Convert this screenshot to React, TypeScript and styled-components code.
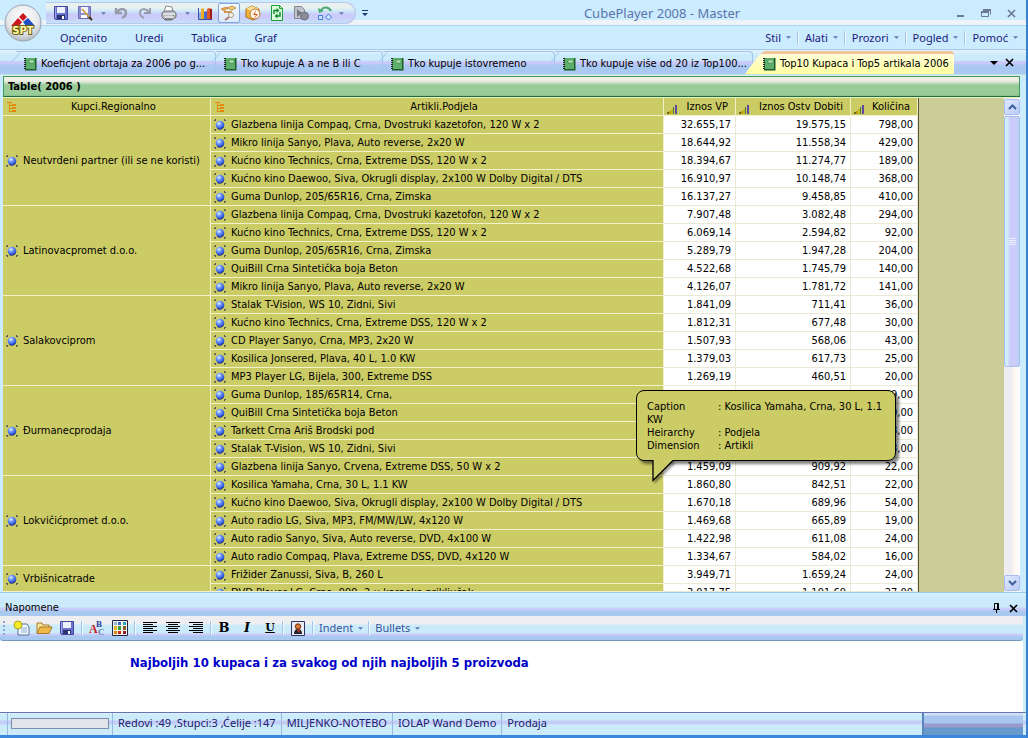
import React from 'react';
import styled, { createGlobalStyle, css } from 'styled-components';

const GlobalStyle = createGlobalStyle`
  * { box-sizing: border-box; }
  body {
    margin: 0;
    font-family: 'DejaVu Sans Condensed', 'Noto Sans', sans-serif;
    font-size: 11px;
    line-height: 14px;
    color: #000;
    background: #cbebff;
  }
  button { font: inherit; color: inherit; background: none; border: 0; padding: 0; margin: 0; white-space: nowrap; }
  svg { display: block; flex: none; }
`;

const UI_FONT = "'Noto Sans', 'Open Sans', sans-serif";

/* ---------- window frame ---------- */

const Window = styled.div`
  min-height: 100vh;
  display: flex;
  flex-direction: column;
  background: #cbebff;
  border-right: 2px solid #3a7fd0;
  border-bottom: 4px solid #3a86dc;
`;

const TitleRow = styled.header`
  height: 26px;
  display: flex;
  align-items: center;
  padding: 0 4px 0 46px;
  position: relative;
  background: linear-gradient(#cbebff 0 20px, #eef3f7 20px 25px, #a9d4f5 25px);
`;

const AppButton = styled.button`
  position: absolute;
  left: 3px;
  top: 2px;
  width: 40px;
  height: 40px;
  z-index: 2;
`;

const QuickBar = styled.div`
  height: 22px;
  width: 310px;
  display: flex;
  align-items: center;
  gap: 2px;
  padding-left: 4px;
  border: 1px solid #b9c6ee;
  border-left: 0;
  border-radius: 0 11px 11px 0;
  background: linear-gradient(#e9f0f0 0 5px, #cde9f8 8px, #ccccfb 11px 15px, #c3e4f6 20px);
`;

const IconButton = styled.button<{ $on?: boolean; $w?: number }>`
  width: ${(p) => p.$w ?? 22}px;
  height: 20px;
  flex: none;
  display: flex;
  align-items: center;
  justify-content: center;
  ${(p) =>
    p.$on &&
    css`
      border: 1px solid #7fa6dc;
      border-radius: 2px;
      background: linear-gradient(#f4f8ff, #dce8fa);
    `}
`;

const Title = styled.h1`
  flex: 1;
  margin: 0;
  text-align: center;
  font: 400 13px/16px ${UI_FONT};
  color: #5c74ac;
`;

const WindowButtons = styled.div`
  display: flex;
  gap: 3px;
`;

const MenuRow = styled.nav`
  height: 23px;
  display: flex;
  align-items: center;
  justify-content: space-between;
  padding: 0 8px 0 60px;
  font: 400 11px/16px ${UI_FONT};
  color: #20207c;
`;

const MenuGroup = styled.div<{ $gap: number }>`
  display: flex;
  align-items: center;
  gap: ${(p) => p.$gap}px;
`;

const DropButton = styled.button`
  display: flex;
  align-items: center;
  gap: 5px;
`;

const Divider = styled.span`
  width: 2px;
  height: 14px;
  background: linear-gradient(90deg, #a5c4ea 50%, #f2f9ff 50%);
`;

/* ---------- document tabs ---------- */

const TabStrip = styled.div`
  height: 27px;
  display: flex;
  align-items: flex-end;
  padding: 0 12px 2px 16px;
  border-top: 1px solid #a7c9ea;
  background: linear-gradient(#dff0fc 0 2px, #cbebfd 5px 10px, #c8c8fa 12px 14px, #a9c9f3 15px 24px, #d8f0e8 25px);
`;

const Tab = styled.button<{ $w: number; $active?: boolean }>`
  position: relative;
  flex: none;
  width: ${(p) => p.$w}px;
  height: 23px;
  display: flex;
  align-items: center;
  gap: 4px;
  padding: 1px 0 0 7px;
  border-top: 1px solid #a3c7ea;
  border-right: 1px solid #a3c7ea;
  border-radius: 0 4px 0 0;
  &::before {
    content: '';
    position: absolute;
    left: 0;
    top: -1px;
    width: 9px;
    height: 11px;
    border-left: 1px solid #a3c7ea;
    transform: skewX(-40deg);
  }
  ${(p) =>
    p.$active &&
    css`
      margin-left: -8px;
      padding: 0 0 0 17px;
      border: 0;
      border-top: 3px solid #f3c59c;
      background: linear-gradient(#fffdd9, #ffffa0);
      clip-path: polygon(0 100%, 14px 4px, 20px 0, 100% 0, 100% 100%);
      &::before {
        display: none;
      }
    `}
`;

const TabTools = styled.div`
  margin-left: auto;
  display: flex;
  align-items: center;
  gap: 7px;
  height: 23px;
`;

/* ---------- table view ---------- */

const View = styled.main`
  flex: 1;
  display: flex;
  flex-direction: column;
  padding: 0 6px 0 3px;
`;

const Caption = styled.h2`
  margin: 0;
  height: 21px;
  padding-left: 4px;
  border: 1px solid #3f9a5c;
  border-bottom-color: #1d6f3c;
  background: linear-gradient(#f0efe6 0 3px, #dce6d6 5px, #99cc99 8px 17px, #86c08a);
  font-weight: 700;
  font-size: 11px;
  line-height: 20px;
`;

const GridPane = styled.div`
  flex: 1;
  position: relative;
  display: flex;
  align-items: stretch;
  border-top: 1px solid #e6efc0;
  background: #cccc99;
`;

const Grid = styled.table`
  flex: none;
  width: 916px;
  height: 100%;
  table-layout: fixed;
  border-spacing: 0;
  border-right: 1px solid #555533;
`;

const Th = styled.th`
  height: 18px;
  padding: 0;
  font-weight: 400;
  background: #cccc66;
  border-right: 1px solid #f1f1cc;
  border-bottom: 1px solid #f1f1cc;
`;

const HeadInner = styled.div<{ $measure?: boolean }>`
  height: 17px;
  display: flex;
  align-items: ${(p) => (p.$measure ? 'flex-end' : 'center')};
  padding: ${(p) => (p.$measure ? '0 7px 1px 3px' : '0 0 0 4px')};
  > span {
    flex: 1;
    text-align: ${(p) => (p.$measure ? 'right' : 'center')};
  }
`;

const Member = styled.td`
  padding: 0;
  background: #cccc66;
  border-right: 1px solid #f1f1cc;
  border-bottom: 1px solid #f1f1cc;
`;

const Line = styled.div<{ $clip?: boolean }>`
  height: ${(p) => (p.$clip ? 7 : 17)}px;
  overflow: hidden;
`;

const MemberInner = styled.div`
  height: 17px;
  display: flex;
  align-items: center;
  gap: 5px;
  padding-left: 3px;
  white-space: nowrap;
`;

const Value = styled.td`
  padding: 0 4px 0 0;
  text-align: right;
  line-height: 17px;
  background: #fff;
  border-right: 1px solid #e9e9d4;
  border-bottom: 1px solid #e9e9d4;
`;

const ScrollBar = styled.div`
  margin-left: auto;
  width: 16px;
  display: flex;
  flex-direction: column;
  gap: 1px;
  padding: 1px 0;
  background: linear-gradient(90deg, #eeeef2 50%, #fff6ee 60%, #fff);
`;

const ScrollButton = styled.button`
  height: 16px;
  display: flex;
  align-items: center;
  justify-content: center;
  border: 1px solid #a9bdf0;
  border-radius: 2px;
  background: linear-gradient(135deg, #e0eafe, #b9cbf6);
`;

const Thumb = styled.div`
  height: 251px;
  display: flex;
  align-items: center;
  justify-content: center;
  border: 1px solid #a9bdf0;
  border-radius: 2px;
  background: linear-gradient(90deg, #d0ecfb 0 20%, #ccccfb 35% 75%, #b4d0f6);
`;

const Spacer = styled.div`
  flex: 1;
`;

const Balloon = styled.div`
  position: absolute;
  left: 633px;
  top: 292px;
  width: 260px;
  height: 71px;
  padding: 9px 10px;
  border: 1px solid #000;
  border-radius: 8px;
  background: #cccc66;
  box-shadow: 3px 3px 3px rgba(0, 0, 0, 0.5);
  line-height: 13px;
  > svg {
    position: absolute;
    left: 15px;
    top: 69px;
    filter: drop-shadow(2px 2px 1px rgba(0, 0, 0, 0.4));
  }
`;

const BalloonLabel = styled.span`
  display: inline-block;
  width: 71px;
`;

/* ---------- notes ---------- */

const NotesHead = styled.div`
  height: 24px;
  display: flex;
  align-items: center;
  justify-content: space-between;
  padding: 7px 8px 0 5px;
  border-top: 1px solid #9ec8ec;
  background: linear-gradient(#d2efff 0 3px, #cbebfd 4px 14px, #c6cdf9 15px 17px, #a9c9f0 18px);
`;

const NotesTools = styled.div`
  height: 25px;
  margin-right: 3px;
  display: flex;
  align-items: center;
  padding-left: 3px;
  border-bottom: 1px solid #7397bd;
  border-radius: 0 0 4px 4px;
  background: linear-gradient(#efeff1 0 8px, #cbebfb 9px 17px, #ccccf8 18px 19px, #a9c9f0 20px);
  color: #3c559c;
  font: 400 11px/16px ${UI_FONT};
`;

const Grip = styled.span`
  width: 2px;
  height: 14px;
  margin-right: 2px;
  background: repeating-linear-gradient(#8fa5cf 0 2px, transparent 2px 4px);
`;

const ToolSet = styled.div<{ $pad?: number }>`
  display: flex;
  align-items: center;
  gap: 1px;
  padding: 0 ${(p) => p.$pad ?? 3}px;
`;

const Notes = styled.textarea`
  display: block;
  width: calc(100% - 3px);
  height: 71px;
  padding: 13px 8px 0 130px;
  border: 0;
  outline: 0;
  resize: none;
  background: #fff;
  color: #0000c8;
  font: 700 13px/18px 'DejaVu Sans Condensed', sans-serif;
`;

/* ---------- status bar ---------- */

const Status = styled.footer`
  height: 23px;
  display: flex;
  align-items: stretch;
  padding: 0 3px 0 7px;
  border-top: 1px solid #6a74b0;
  background: linear-gradient(#d9f1fe 0 1px, #cbebfb 2px 7px, #c3cdf8 8px 11px, #cbebfb 12px);
  font-family: ${UI_FONT};
  color: #20206c;
`;

const StatusCell = styled.span<{ $pad?: number }>`
  display: flex;
  align-items: center;
  padding: 0 ${(p) => p.$pad ?? 5}px 2px;
  border-left: 1px solid #9bb9e0;
  white-space: nowrap;
`;

const Load = styled.progress`
  appearance: none;
  width: 98px;
  height: 11px;
  border: 1px solid #7d8fa8;
  &::-webkit-progress-bar {
    background: #e2e4ea;
  }
`;

const StatusEnd = styled.div`
  margin-left: auto;
  width: 101px;
  border-left: 2px solid #5c86bc;
  background: linear-gradient(#cfe0f8 0 2px, #a9c7ee 3px 10px, #9999cc 11px 14px, #6699cc 15px);
`;

/* ---------- icons ---------- */

const Caret = ({ color = '#5a78b4', w = 5 }: { color?: string; w?: number }) => (
  <svg width={w} height="3" viewBox="0 0 6 3"><path d="M0 0h6L3 3z" fill={color} /></svg>
);

const Logo = () => (
  <svg width="40" height="40" viewBox="0 0 40 40">
    <defs>
      <radialGradient id="orb" cx="50%" cy="35%" r="65%">
        <stop offset="0" stopColor="#fff" />
        <stop offset="0.65" stopColor="#e6e9ec" />
        <stop offset="1" stopColor="#b4bac2" />
      </radialGradient>
    </defs>
    <circle cx="20" cy="21" r="18" fill="url(#orb)" stroke="#9aa4b0" />
    <path d="M20 11l4 4-4 4-4-4z" fill="#cc1720" />
    <path d="M15 16l4 4-3 4H8z" fill="#cc1720" />
    <path d="M25 16l7 8h-9l-3-4z" fill="#1f4fc4" />
    <text x="20" y="32" textAnchor="middle" fontFamily="DejaVu Sans" fontWeight="700" fontSize="10" fill="#fff9a8" stroke="#6d5c10" strokeWidth="2" paintOrder="stroke">SPT</text>
  </svg>
);

const Floppy = () => (
  <svg width="16" height="16" viewBox="0 0 16 16">
    <path d="M1.500 1.500h13v13h-12l-1-1z" fill="#6a72cc" stroke="#3f479c" />
    <path d="M4 2h8v6H4z" fill="#eef2ff" />
    <path d="M4 10h8v4H4z" fill="#2a3270" />
    <path d="M9 11h2v3H9z" fill="#fff" />
    <path d="M2 2h1v11H2z" fill="#9ea6f0" />
  </svg>
);

const FloppyPen = () => (
  <svg width="16" height="16" viewBox="0 0 16 16">
    <path d="M1.500 1.500h12v12h-12z" fill="#8a8fd4" stroke="#6a6fb4" />
    <path d="M4 2h7v6H4z" fill="#f4f4ff" />
    <path d="M4 10h6v3H4z" fill="#fff" />
    <path d="M5 4l9 10" stroke="#d0a040" strokeWidth="1.800" />
    <path d="M12 12l3 3" stroke="#403010" strokeWidth="2" />
  </svg>
);

const Undo = ({ flip }: { flip?: boolean }) => (
  <svg width="16" height="16" viewBox="0 0 16 16">
    <g transform={flip ? 'translate(16 0) scale(-1 1)' : undefined} fill="none" stroke="#9798a8" strokeWidth={flip ? 1.8 : 2.4}>
      <path d="M4 7c3-4 9-4 9 1 0 2-2 4-4 5" />
      <path d="M3 3v5h6" />
    </g>
  </svg>
);

const Printer = () => (
  <svg width="16" height="16" viewBox="0 0 16 16">
    <path d="M5 1l6 1 1 5H3z" fill="#fff" stroke="#888" />
    <path d="M1 8l3-2h9l2 2v4l-4 3H4l-3-3z" fill="#b9bcc2" stroke="#6d7078" />
    <path d="M2 9h12M4 12h8" stroke="#fff" />
    <path d="M4 14h7" stroke="#555" />
    <path d="M12 10h1v1h-1z" fill="#3a3" />
  </svg>
);

const Bars = () => (
  <svg width="16" height="16" viewBox="0 0 16 16">
    <path d="M1.500 3v11.500H15" stroke="#3a50a8" fill="none" />
    <path d="M2 8l2-1v7H2z" fill="#8cacec" />
    <path d="M4 4l2-1 1 1v10H4z" fill="#e8b020" />
    <path d="M7 7l2-1 1 1v7H7z" fill="#4867c8" />
    <path d="M10 4l2-1 3 1v10h-5z" fill="#e0582c" />
    <path d="M13 4h2v10h-2z" fill="#9c1c14" />
  </svg>
);

const Explore = () => (
  <svg width="16" height="16" viewBox="0 0 16 16">
    <path d="M0 4l5-2 2 1-4 3z" fill="#e8a850" stroke="#b87830" strokeWidth=".6" />
    <path d="M6 3l5-2 4 2-4 2z" fill="#f4d070" stroke="#b88430" strokeWidth=".8" />
    <path d="M3 7h8" fill="none" stroke="#d09848" strokeWidth="2" />
    <circle cx="10" cy="10" r="2.500" fill="#f8f4e4" stroke="#a89c80" />
    <path d="M8 12l-4 3" stroke="#b07a72" strokeWidth="2" />
  </svg>
);

const CubeBolt = () => (
  <svg width="16" height="16" viewBox="0 0 16 16">
    <path d="M1 4l6-3 7 3v8l-6 3-7-3z" fill="#f4b33c" stroke="#a86b14" />
    <path d="M1 4l7 2 6-2-7-3z" fill="#ffe29a" />
    <circle cx="10" cy="9" r="5" fill="#fff6e8" stroke="#b77a3a" />
    <path d="M11 5L8 10h3l-2 4 4-5h-3z" fill="#d65c1c" />
  </svg>
);

const Refresh = () => (
  <svg width="16" height="16" viewBox="0 0 16 16">
    <path d="M2.500.5h8l3 3v12h-11z" fill="#dcffe0" stroke="#1f9a3a" />
    <path d="M10.500.5v3h3" fill="none" stroke="#1f9a3a" />
    <path d="M5 9V5.500h3M11 7v4H8" fill="none" stroke="#12872c" strokeWidth="1.500" />
    <path d="M7.500 3l3 2.500-3 2.500zM8.500 8.500v5l-3-2.500z" fill="#12872c" />
  </svg>
);

const DocPlay = () => (
  <svg width="16" height="16" viewBox="0 0 16 16">
    <path d="M1.500 1.500h7l3 3v9h-10z" fill="#c2c3cc" stroke="#85868f" />
    <path d="M4 4l5 4-5 4z" fill="#777884" />
    <circle cx="11.500" cy="11" r="4" fill="#8c8d98" stroke="#6d6e78" />
  </svg>
);

const Shapes = () => (
  <svg width="16" height="16" viewBox="0 0 16 16">
    <path d="M4 5c3-4 8-3 10 1" fill="none" stroke="#4aa870" strokeWidth="2" />
    <path d="M1 3l1 5 5-2z" fill="#4aa870" />
    <path d="M1.500 10.500h4v4h-4z" fill="#cfe4ff" stroke="#3c7be0" />
    <path d="M11.500 9l3 3-3 3-3-3z" fill="#cfe4ff" stroke="#3c7be0" />
  </svg>
);

const Book = () => (
  <svg width="14" height="14" viewBox="0 0 14 14">
    <path d="M2 1h11v12H2z" fill="#3f9150" />
    <path d="M12 1h1.500v12.500H2V12h10z" fill="#1d5c2b" />
    <path d="M3 1h9v11H3z" fill="#5cae6a" />
    <path d="M6 3h5v3H6z" fill="#b5e0b0" stroke="#3a8448" strokeWidth=".6" />
    <path d="M1 1.500h2M1 3.500h2M1 5.500h2M1 7.500h2M1 9.500h2M1 11.500h2" stroke="#222" />
  </svg>
);

const Hierarchy = () => (
  <svg width="10" height="12" viewBox="0 0 10 12">
    <path d="M0 1.500h5M2.500 2v9M3 4.500h2M3 7.500h2M3 10.500h2" stroke="#e08a10" fill="none" />
    <path d="M5 3h4v2H5zM5 6h4v2H5zM5 9h4v2H5z" fill="#e08a10" />
  </svg>
);

const Ball = () => (
  <svg width="12" height="12" viewBox="0 0 12 12">
    <defs>
      <radialGradient id="ball" cx="38%" cy="32%" r="70%">
        <stop offset="0" stopColor="#eaf4ff" />
        <stop offset="0.4" stopColor="#6c98f8" />
        <stop offset="1" stopColor="#1c3cc8" />
      </radialGradient>
    </defs>
    <path d="M0 1.500h1.500V0M12 1.500h-1.500V0M0 10.500h1.500V12M12 10.500h-1.500V12" fill="none" stroke="#3c4c50" />
    <circle cx="6" cy="6" r="4.300" fill="url(#ball)" />
    <path d="M3 9.500c2 1.500 5 1 6.500-1.500" fill="none" stroke="#14247c" strokeWidth=".8" />
  </svg>
);

const Measure = () => (
  <svg width="11" height="9" viewBox="0 0 11 9">
    <path d="M0 7h2v2H0z" fill="#6c6820" />
    <path d="M2 6h2v3H2z" fill="#b89c10" />
    <path d="M4 4h2v5H4z" fill="#d0b820" />
    <path d="M6 2h1v7H6z" fill="#3c7858" />
    <path d="M8 0h2v9H8z" fill="#6048a0" />
  </svg>
);

const Chevron = ({ up }: { up?: boolean }) => (
  <svg width="9" height="6" viewBox="0 0 9 6">
    <path d={up ? 'M1 5l3.500-3.500L8 5' : 'M1 1l3.500 3.500L8 1'} fill="none" stroke="#3f5f9c" strokeWidth="2" />
  </svg>
);

const Cross = ({ color = '#000', s = 9 }: { color?: string; s?: number }) => (
  <svg width={s} height={s} viewBox="0 0 9 9"><path d="M1 1l7 7M8 1L1 8" stroke={color} strokeWidth="1.700" /></svg>
);

const NewNote = () => (
  <svg width="17" height="16" viewBox="0 0 17 16">
    <path d="M5 4h9l2 3v8H5z" fill="#f2f8ff" stroke="#56719c" />
    <path d="M8 8h6M8 10h6M8 12h6" stroke="#8fb0d8" />
    <circle cx="5" cy="5" r="4" fill="#f4ea28" stroke="#9c9210" strokeWidth=".8" />
  </svg>
);

const Folder = () => (
  <svg width="17" height="16" viewBox="0 0 17 16">
    <path d="M1 13V3h5l1 2h6v3" fill="#fbe49a" stroke="#a8782c" />
    <path d="M1 13.500L4 7h12l-3 6.500z" fill="#f0b848" stroke="#a8782c" />
  </svg>
);

const FontIcon = () => (
  <svg width="16" height="16" viewBox="0 0 16 16" fontFamily="Liberation Serif" fontWeight="700">
    <text x="0" y="13" fontSize="12" fill="#cc1c24">A</text>
    <text x="7" y="7" fontSize="9" fill="#2b3f9c">B</text>
    <text x="9" y="15" fontSize="9" fill="#7080a8">C</text>
  </svg>
);

const Palette = () => (
  <svg width="16" height="16" viewBox="0 0 16 16">
    <path d="M.5.5h15v15H.5z" fill="#f5f3e4" stroke="#22264a" />
    <path d="M2 2h3v3H2z" fill="#9ab4d8" /><path d="M6 2h3v3H6z" fill="#3c68d0" /><path d="M11 2h3v3h-3z" fill="#28a8c8" />
    <path d="M2 6h3v4H2z" fill="#d8b820" /><path d="M6 6h3v4H6z" fill="#3c9c3c" /><path d="M11 6h3v4h-3z" fill="#7a5c30" />
    <path d="M2 11h3v3H2z" fill="#e08018" /><path d="M6 11h3v3H6z" fill="#cc2818" /><path d="M11 11h3v3h-3z" fill="#8c1c28" />
  </svg>
);

const Align = ({ kind }: { kind: 'left' | 'center' | 'right' }) => {
  const x = { left: 0, center: 2, right: 4 }[kind];
  return (
    <svg width="14" height="12" viewBox="0 0 14 12">
      <path d={`M0 .5h14M${x} 2.500h10M0 4.500h14M${x} 6.500h10M0 8.500h14M${x} 10.500h10`} stroke="#000" />
    </svg>
  );
};

const Portrait = () => (
  <svg width="14" height="15" viewBox="0 0 14 15">
    <path d="M.5.5h13v14H.5z" fill="#e8eaf4" stroke="#2c3460" />
    <path d="M3 13c0-4 2-5 4-5s4 1 4 5z" fill="#20242c" />
    <circle cx="7" cy="5.500" r="2.700" fill="#d87838" stroke="#702c10" />
    <path d="M6 9h3l-1 3z" fill="#d83018" />
  </svg>
);

const Letter = styled.span<{ $kind: 'b' | 'i' | 'u' }>`
  font: 700 13px/16px 'DejaVu Serif', serif;
  color: #000;
  ${(p) => p.$kind === 'i' && 'font-style: italic;'}
  ${(p) => p.$kind === 'u' && 'text-decoration: underline; font-size: 11px;'}
`;

/* ---------- data ---------- */

type Row = [string, string, string, string];

const groups: { name: string; rows: Row[] }[] = [
  {
    name: 'Neutvrđeni partner (ili se ne koristi)',
    rows: [
      ['Glazbena linija Compaq, Crna, Dvostruki kazetofon, 120 W x 2', '32.655,17', '19.575,15', '798,00'],
      ['Mikro linija Sanyo, Plava, Auto reverse, 2x20 W', '18.644,92', '11.558,34', '429,00'],
      ['Kućno kino Technics, Crna, Extreme DSS, 120 W x 2', '18.394,67', '11.274,77', '189,00'],
      ['Kućno kino Daewoo, Siva, Okrugli display, 2x100 W Dolby Digital / DTS', '16.910,97', '10.148,74', '368,00'],
      ['Guma Dunlop, 205/65R16, Crna, Zimska', '16.137,27', '9.458,85', '410,00'],
    ],
  },
  {
    name: 'Latinovacpromet d.o.o.',
    rows: [
      ['Glazbena linija Compaq, Crna, Dvostruki kazetofon, 120 W x 2', '7.907,48', '3.082,48', '294,00'],
      ['Kućno kino Technics, Crna, Extreme DSS, 120 W x 2', '6.069,14', '2.594,82', '92,00'],
      ['Guma Dunlop, 205/65R16, Crna, Zimska', '5.289,79', '1.947,28', '204,00'],
      ['QuiBill Crna Sintetička boja Beton', '4.522,68', '1.745,79', '140,00'],
      ['Mikro linija Sanyo, Plava, Auto reverse, 2x20 W', '4.126,07', '1.781,72', '141,00'],
    ],
  },
  {
    name: 'Salakovciprom',
    rows: [
      ['Stalak T-Vision, WS 10, Zidni, Sivi', '1.841,09', '711,41', '36,00'],
      ['Kućno kino Technics, Crna, Extreme DSS, 120 W x 2', '1.812,31', '677,48', '30,00'],
      ['CD Player Sanyo, Crna, MP3, 2x20 W', '1.507,93', '568,06', '43,00'],
      ['Kosilica Jonsered, Plava, 40 L, 1.0 KW', '1.379,03', '617,73', '25,00'],
      ['MP3 Player LG, Bijela, 300, Extreme DSS', '1.269,19', '460,51', '20,00'],
    ],
  },
  {
    name: 'Đurmanecprodaja',
    rows: [
      ['Guma Dunlop, 185/65R14, Crna,', '', '', '39,00'],
      ['QuiBill Crna Sintetička boja Beton', '', '', '20,00'],
      ['Tarkett Crna Ariš Brodski pod', '', '', '28,00'],
      ['Stalak T-Vision, WS 10, Zidni, Sivi', '', '', '28,00'],
      ['Glazbena linija Sanyo, Crvena, Extreme DSS, 50 W x 2', '1.459,09', '909,92', '22,00'],
    ],
  },
  {
    name: 'Lokvičićpromet d.o.o.',
    rows: [
      ['Kosilica Yamaha, Crna, 30 L, 1.1 KW', '1.860,80', '842,51', '22,00'],
      ['Kućno kino Daewoo, Siva, Okrugli display, 2x100 W Dolby Digital / DTS', '1.670,18', '689,96', '54,00'],
      ['Auto radio LG, Siva, MP3, FM/MW/LW, 4x120 W', '1.469,68', '665,89', '19,00'],
      ['Auto radio Sanyo, Siva, Auto reverse, DVD, 4x100 W', '1.422,98', '611,08', '24,00'],
      ['Auto radio Compaq, Plava, Extreme DSS, DVD, 4x120 W', '1.334,67', '584,02', '16,00'],
    ],
  },
  {
    name: 'Vrbišnicatrade',
    rows: [
      ['Frižider Zanussi, Siva, B, 260 L', '3.949,71', '1.659,24', '24,00'],
      ['DVD Player LG, Crna, 999, 2-u karaoke priključak', '3.017,75', '1.191,69', '27,00'],
    ],
  },
];

const tabs = [
  { label: 'Koeficjent obrtaja za 2006 po g...', w: 200 },
  { label: 'Tko kupuje A a ne B ili C', w: 167 },
  { label: 'Tko kupuje istovremeno', w: 172 },
  { label: 'Tko kupuje više od 20 iz Top100...', w: 198 },
];

const dropMenus = ['Stil', 'Alati', 'Prozori', 'Pogled', 'Pomoć'];

export default function App() {
  return (
    <>
      <GlobalStyle />
      <Window>
        <TitleRow>
          <AppButton aria-label="SPT"><Logo /></AppButton>
          <QuickBar>
            <IconButton><Floppy /></IconButton>
            <IconButton><FloppyPen /></IconButton>
            <IconButton $w={10}><Caret /></IconButton>
            <IconButton><Undo /></IconButton>
            <IconButton><Undo flip /></IconButton>
            <IconButton><Printer /></IconButton>
            <IconButton $w={10}><Caret /></IconButton>
            <IconButton><Bars /></IconButton>
            <IconButton $on><Explore /></IconButton>
            <IconButton><CubeBolt /></IconButton>
            <IconButton><Refresh /></IconButton>
            <IconButton><DocPlay /></IconButton>
            <IconButton><Shapes /></IconButton>
            <IconButton $w={7}><Caret /></IconButton>
          </QuickBar>
          <IconButton $w={18}>
            <svg width="6" height="6" viewBox="0 0 6 6"><path d="M0 0h6v1H0zM0 3h6L3 6z" fill="#1c3c78" /></svg>
          </IconButton>
          <Title>CubePlayer 2008 - Master</Title>
          <WindowButtons>
            <IconButton aria-label="Minimize"><svg width="8" height="8"><path d="M0 6h7v2H0z" fill="#6d7a94" /></svg></IconButton>
            <IconButton aria-label="Restore">
              <svg width="10" height="8" viewBox="0 0 10 8"><path d="M2.500 1h7v4.500M.5 3h7v4.500h-7z" fill="none" stroke="#6d7a94" /><path d="M2 0h8v2H2zM0 2h8v2H0z" fill="#6d7a94" /></svg>
            </IconButton>
            <IconButton aria-label="Close"><Cross color="#6d7a94" /></IconButton>
          </WindowButtons>
        </TitleRow>

        <MenuRow>
          <MenuGroup $gap={28}>
            <button>Općenito</button>
            <button>Uredi</button>
            <button>Tablica</button>
            <button>Graf</button>
          </MenuGroup>
          <MenuGroup $gap={6}>
            {dropMenus.map((m, i) => (
              <React.Fragment key={m}>
                {i > 0 && <Divider />}
                <DropButton>{m}<Caret /></DropButton>
              </React.Fragment>
            ))}
          </MenuGroup>
        </MenuRow>

        <TabStrip>
          {tabs.map((t) => (
            <Tab key={t.label} $w={t.w}><Book />{t.label}</Tab>
          ))}
          <Tab $w={209} $active><Book />Top10 Kupaca i Top5 artikala 2006</Tab>
          <TabTools>
            <button aria-label="Tab list"><svg width="8" height="4"><path d="M0 0h8L4 4z" /></svg></button>
            <button aria-label="Close tab"><Cross /></button>
          </TabTools>
        </TabStrip>

        <View>
          <Caption>Table( 2006 )</Caption>
          <GridPane>
            <Grid>
              <colgroup>
                <col style={{ width: 208 }} />
                <col style={{ width: 453 }} />
                <col style={{ width: 72 }} />
                <col style={{ width: 115 }} />
                <col />
              </colgroup>
              <thead>
                <tr>
                  <Th><HeadInner><Hierarchy /><span>Kupci.Regionalno</span></HeadInner></Th>
                  <Th><HeadInner><Hierarchy /><span>Artikli.Podjela</span></HeadInner></Th>
                  <Th><HeadInner $measure><Measure /><span>Iznos VP</span></HeadInner></Th>
                  <Th><HeadInner $measure><Measure /><span>Iznos Ostv Dobiti</span></HeadInner></Th>
                  <Th><HeadInner $measure><Measure /><span>Količina</span></HeadInner></Th>
                </tr>
              </thead>
              <tbody>
                {groups.map((g, gi) =>
                  g.rows.map((r, ri) => {
                    const clip = gi === groups.length - 1 && ri === g.rows.length - 1;
                    return (
                      <tr key={`${gi}-${ri}`}>
                        {ri === 0 && (
                          <Member rowSpan={g.rows.length}><MemberInner><Ball />{g.name}</MemberInner></Member>
                        )}
                        <Member><Line $clip={clip}><MemberInner><Ball />{r[0]}</MemberInner></Line></Member>
                        <Value><Line $clip={clip}>{r[1]}</Line></Value>
                        <Value><Line $clip={clip}>{r[2]}</Line></Value>
                        <Value><Line $clip={clip}>{r[3]}</Line></Value>
                      </tr>
                    );
                  })
                )}
              </tbody>
            </Grid>
            <ScrollBar>
              <ScrollButton aria-label="Scroll up"><Chevron up /></ScrollButton>
              <Thumb>
                <svg width="7" height="8"><path d="M0 .5h7M0 2.500h7M0 4.500h7M0 6.500h7" stroke="#eaf2ff" /></svg>
              </Thumb>
              <Spacer />
              <ScrollButton aria-label="Scroll down"><Chevron /></ScrollButton>
            </ScrollBar>
            <Balloon role="tooltip">
              <div><BalloonLabel>Caption</BalloonLabel>: Kosilica Yamaha, Crna, 30 L, 1.1 KW</div>
              <div><BalloonLabel>Heirarchy</BalloonLabel>: Podjela</div>
              <div><BalloonLabel>Dimension</BalloonLabel>: Artikli</div>
              <svg width="24" height="24" viewBox="0 0 24 24">
                <path d="M1 0v21L21 0z" fill="#cccc66" />
                <path d="M1 0v20.500L21 .5" fill="none" stroke="#000" strokeWidth="1.300" />
              </svg>
            </Balloon>
          </GridPane>
        </View>

        <section>
          <NotesHead>
            <label htmlFor="notes">Napomene</label>
            <MenuGroup $gap={8}>
              <button aria-label="Pin"><svg width="9" height="10" viewBox="0 0 9 10"><path d="M2.500 6V.5h4V6M1 6.500h7M4.500 7v3M5.500 1v5" stroke="#000" fill="none" /></svg></button>
              <button aria-label="Close notes"><Cross /></button>
            </MenuGroup>
          </NotesHead>
          <NotesTools>
            <Grip />
            <ToolSet>
              <IconButton><NewNote /></IconButton>
              <IconButton><Folder /></IconButton>
              <IconButton><Floppy /></IconButton>
            </ToolSet>
            <Divider />
            <ToolSet>
              <IconButton><FontIcon /></IconButton>
              <IconButton><Palette /></IconButton>
            </ToolSet>
            <Divider />
            <ToolSet>
              <IconButton><Align kind="left" /></IconButton>
              <IconButton><Align kind="center" /></IconButton>
              <IconButton><Align kind="right" /></IconButton>
            </ToolSet>
            <Divider />
            <ToolSet $pad={1}>
              <IconButton><Letter $kind="b">B</Letter></IconButton>
              <IconButton><Letter $kind="i">I</Letter></IconButton>
              <IconButton><Letter $kind="u">U</Letter></IconButton>
            </ToolSet>
            <Divider />
            <ToolSet><IconButton><Portrait /></IconButton></ToolSet>
            <Divider />
            <ToolSet $pad={5}><DropButton>Indent<Caret /></DropButton></ToolSet>
            <Divider />
            <ToolSet $pad={5}><DropButton>Bullets<Caret /></DropButton></ToolSet>
          </NotesTools>
          <Notes id="notes" spellCheck={false} defaultValue="Najboljih 10 kupaca i za svakog od njih najboljih 5 proizvoda" />
        </section>

        <Status>
          <StatusCell $pad={3}><Load value={0} max={100} aria-label="Progress" /></StatusCell>
          <StatusCell>Redovi :49 ,Stupci:3 ,Ćelije :147</StatusCell>
          <StatusCell>MILJENKO-NOTEBO</StatusCell>
          <StatusCell>IOLAP Wand Demo</StatusCell>
          <StatusCell>Prodaja</StatusCell>
          <StatusEnd />
        </Status>
      </Window>
    </>
  );
}
